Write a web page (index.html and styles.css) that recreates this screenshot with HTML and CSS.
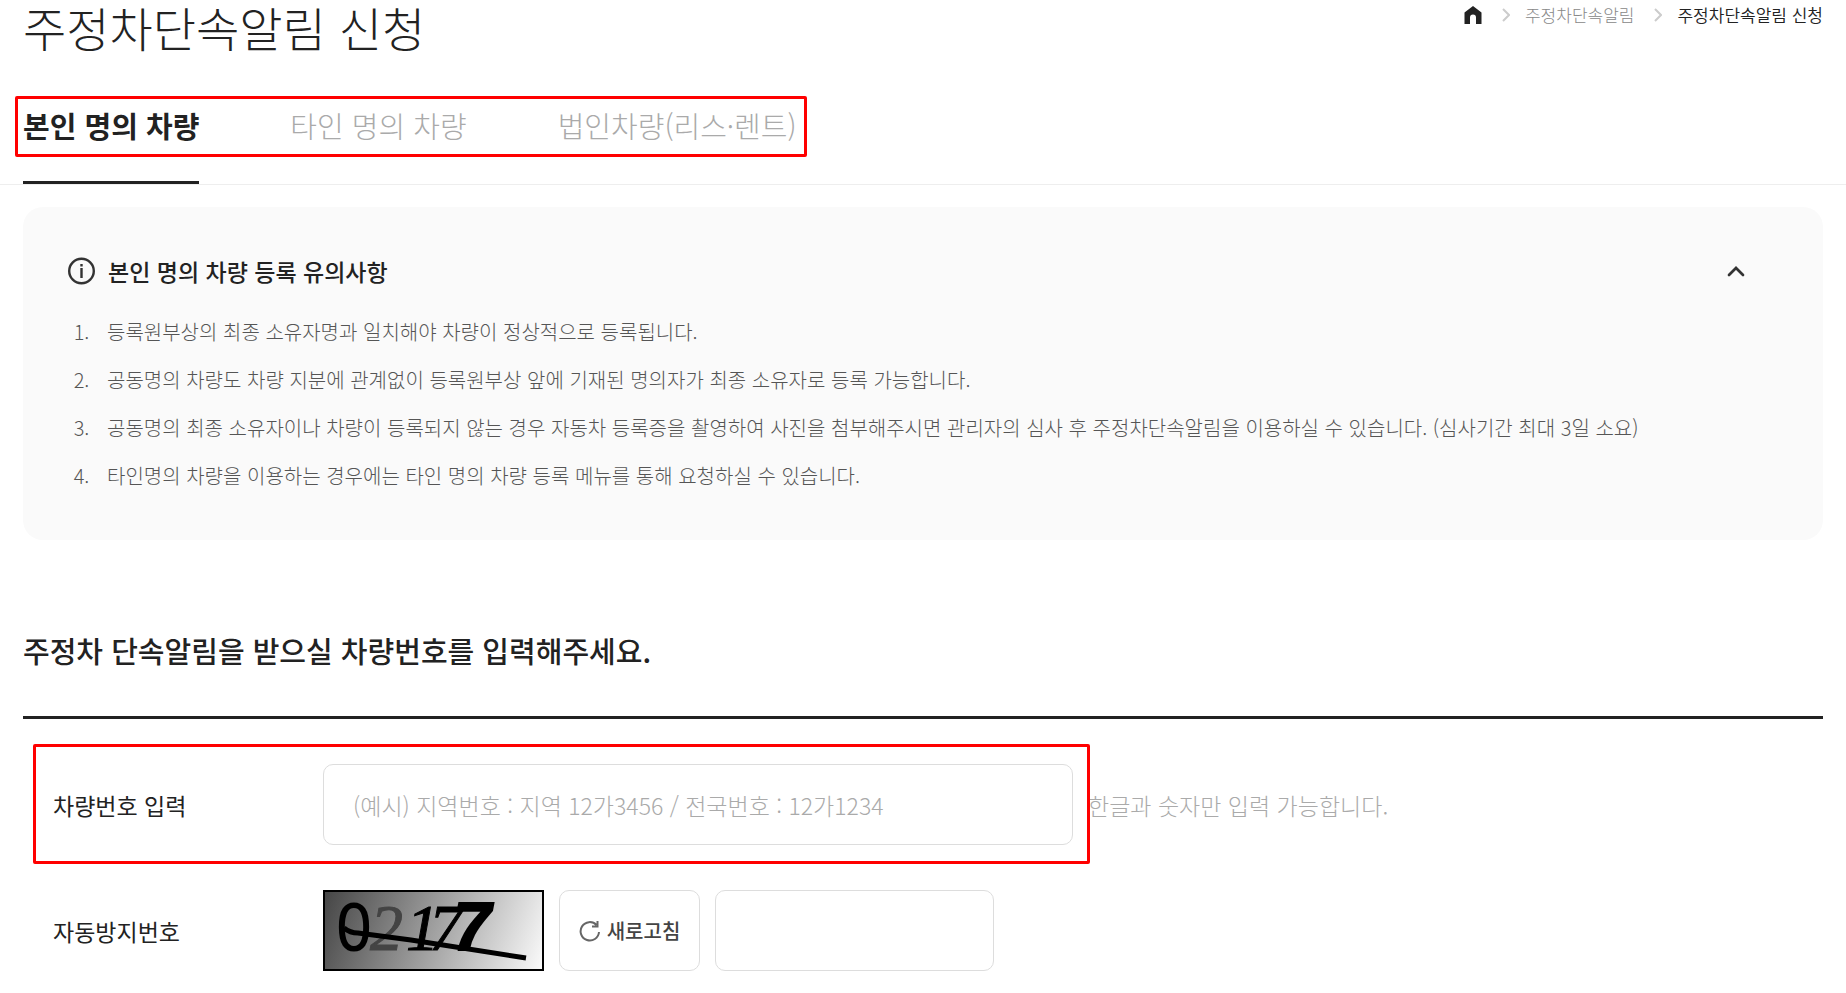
FILE: index.html
```
<!DOCTYPE html>
<html lang="ko">
<head>
    <meta charset="UTF-8">
    <meta name="viewport" content="width=device-width, initial-scale=1.0">
    <title>주정차단속알림 신청</title>
    <link rel="stylesheet" href="styles.css">
</head>
<body>
    <header class="page-header">
        <h1 class="page-title">주정차단속알림 신청</h1>
        <nav class="breadcrumb" aria-label="현재 위치">
            <a href="#" class="home" aria-label="홈">
                <svg width="18" height="18" viewBox="0 0 18 18"><path d="M9 0 .5 6.500V18H6v-6.500a3 3 0 0 1 6 0V18h5.500V6.500z" fill="#222"/></svg>
            </a>
            <svg class="sep" width="8" height="14" viewBox="0 0 8 14"><path d="m1 1 6 6-6 6" fill="none" stroke="#ccc" stroke-width="2"/></svg>
            <a href="#">주정차단속알림</a>
            <svg class="sep" width="8" height="14" viewBox="0 0 8 14"><path d="m1 1 6 6-6 6" fill="none" stroke="#ccc" stroke-width="2"/></svg>
            <a href="#" class="current">주정차단속알림 신청</a>
        </nav>
    </header>

    <nav class="tabs">
        <div class="tab-list">
            <a href="#" class="tab active">본인 명의 차량</a>
            <a href="#" class="tab">타인 명의 차량</a>
            <a href="#" class="tab">법인차량(리스·렌트)</a>
        </div>
    </nav>

    <main class="content">
        <section class="notice">
            <div class="notice-head">
                <svg width="28" height="28" viewBox="0 0 28 28">
                    <circle cx="13.500" cy="14" r="12.300" fill="none" stroke="#333" stroke-width="2.400"/>
                    <path d="M13.500 11v10M13.500 7v2.500" stroke="#333" stroke-width="2.400"/>
                </svg>
                <h2>본인 명의 차량 등록 유의사항</h2>
                <button type="button" class="toggle" aria-label="접기">
                    <svg width="18" height="12" viewBox="0 0 18 12"><path d="m2 10 7-7 7 7" fill="none" stroke="#333" stroke-width="2.700" stroke-linecap="round"/></svg>
                </button>
            </div>
            <ol class="notice-list">
                <li>등록원부상의 최종 소유자명과 일치해야 차량이 정상적으로 등록됩니다.</li>
                <li>공동명의 차량도 차량 지분에 관계없이 등록원부상 앞에 기재된 명의자가 최종 소유자로 등록 가능합니다.</li>
                <li>공동명의 최종 소유자이나 차량이 등록되지 않는 경우 자동차 등록증을 촬영하여 사진을 첨부해주시면 관리자의 심사 후 주정차단속알림을 이용하실 수 있습니다. (심사기간 최대 3일 소요)</li>
                <li>타인명의 차량을 이용하는 경우에는 타인 명의 차량 등록 메뉴를 통해 요청하실 수 있습니다.</li>
            </ol>
        </section>

        <h2 class="form-title">주정차 단속알림을 받으실 차량번호를 입력해주세요.</h2>

        <form class="form">
            <div class="row marked">
                <label for="carNo">차량번호 입력</label>
                <input type="text" id="carNo" class="car-no" placeholder="(예시) 지역번호 : 지역 12가3456 / 전국번호 : 12가1234">
                <span class="hint">한글과 숫자만 입력 가능합니다.</span>
            </div>
            <div class="row">
                <label for="captcha">자동방지번호</label>
                <svg class="captcha" width="221" height="81" viewBox="0 0 221 81">
                    <defs>
                        <linearGradient id="shade" gradientUnits="userSpaceOnUse" x1="0" y1="0" x2="221" y2="81">
                            <stop offset="0" stop-color="#444"/>
                            <stop offset="1" stop-color="#fcfcfc"/>
                        </linearGradient>
                    </defs>
                    <rect x="1" y="1" width="219" height="79" fill="url(#shade)" stroke="#000" stroke-width="2"/>
                    <text class="d0" x="12" y="59">0</text>
                    <text class="d1" x="47" y="60">2</text>
                    <text class="d2" x="83" y="60">1</text>
                    <text class="d3" x="106" y="60">7</text>
                    <text class="d4" x="130" y="60">7</text>
                    <path d="M21 38q6 5 14 5l53 7 115 18" fill="none" stroke="#000" stroke-width="5"/>
                </svg>
                <button type="button" class="refresh">
                    <svg width="22" height="22" viewBox="0 0 22 22"><path d="M17.500 5A9.200 9.200 0 1 0 20 12M18.500 1v5.500H13" fill="none" stroke="#666" stroke-width="2"/></svg>
                    새로고침
                </button>
                <input type="text" id="captcha" class="captcha-input">
            </div>
        </form>
    </main>
</body>
</html>
```
FILE: styles.css
```
*, *::after {
    box-sizing: border-box;
}
body {
    margin: 0;
    font-family: "Noto Sans CJK KR", sans-serif;
    font-weight: 300;
    color: #222;
    background: white;
}
a {
    color: inherit;
    text-decoration: none;
}
h1, h2, ol {
    margin: 0;
    padding: 0;
}
.page-header {
    display: flex;
    justify-content: space-between;
    align-items: flex-start;
    padding: 0 23px;
}
.page-title {
    font-size: 47px;
    font-weight: 300;
    line-height: 54px;
}
.breadcrumb {
    display: flex;
    align-items: center;
    font-size: 17px;
    line-height: 29px;
    color: #888;
}
.breadcrumb .home {
    display: flex;
}
.breadcrumb .sep {
    margin: 0 15px 0 20px;
}
.breadcrumb .current {
    color: #222;
    font-weight: 350;
}
.tabs {
    padding: 42px 23px 0;
    border-bottom: 1px solid #eee;
}
.tab-list {
    display: flex;
    gap: 91px;
    width: fit-content;
    position: relative;
}
.tab-list::after {
    content: "";
    position: absolute;
    top: 0;
    left: -8px;
    right: -10px;
    height: 61px;
    border: 3px solid red;
    border-radius: 2px;
    pointer-events: none;
}
.tab {
    font-size: 29px;
    line-height: 58px;
    padding-bottom: 27px;
    color: #aaa;
    border-bottom: 3px solid transparent;
}
.tab.active {
    font-weight: bold;
    color: #222;
    border-bottom-color: #222;
}
.content {
    padding: 22px 23px;
}
.notice {
    padding: 44px 45px 40px;
    background: #fafafa;
    border-radius: 20px;
}
.notice-head {
    display: flex;
    align-items: center;
    gap: 12px;
    line-height: 40px;
}
.notice-head h2 {
    font-size: 23px;
    font-weight: 500;
}
.toggle {
    display: flex;
    margin-left: auto;
    margin-right: 25px;
    padding: 8px;
    border: none;
    background: none;
    cursor: pointer;
}
.notice-list {
    margin-top: 17px;
    padding-left: 27px;
    font-size: 20px;
    line-height: 48px;
    color: #555;
}
.notice-list li {
    padding-left: 12px;
}
.form-title {
    padding: 80px 0 36px;
    font-size: 29px;
    font-weight: 500;
    line-height: 60px;
    border-bottom: 3px solid #222;
}
.form {
    padding-top: 45px;
}
.row {
    display: flex;
    align-items: center;
    gap: 15px;
    width: fit-content;
    margin-bottom: 45px;
    padding-left: 30px;
    position: relative;
}
.row label {
    width: 255px;
    font-size: 23px;
    font-weight: 400;
}
.row.marked::after {
    content: "";
    position: absolute;
    top: -20px;
    bottom: -19px;
    left: 10px;
    width: 1057px;
    border: 3px solid red;
    border-radius: 2px;
    pointer-events: none;
}
.row input, .refresh {
    height: 81px;
    border: 1px solid #ddd;
    border-radius: 10px;
    background: white;
    font-family: inherit;
}
.car-no {
    width: 750px;
    padding: 0 29px;
    font-size: 23px;
    font-weight: 300;
}
.car-no::placeholder {
    color: #aaa;
}
.hint {
    font-size: 23px;
    color: #aaa;
}
.captcha-input {
    width: 279px;
    padding: 0 20px;
    font-size: 23px;
}
.refresh {
    display: flex;
    align-items: center;
    justify-content: center;
    gap: 6px;
    width: 141px;
    font-size: 20px;
    font-weight: 500;
    color: #444;
    cursor: pointer;
}
.captcha text {
    font-family: "Liberation Serif", serif;
    font-style: italic;
    font-size: 66px;
}
.captcha .d0 {
    font-family: "DejaVu Sans", sans-serif;
    font-style: normal;
    font-size: 60px;
    stroke: #000;
    stroke-width: 3px;
}
.captcha .d1 {
    fill: #444;
    stroke: #444;
}
.captcha .d2, .captcha .d3 {
    stroke: #000;
}
.captcha .d4 {
    font-family: "Liberation Sans", sans-serif;
    font-weight: bold;
    font-size: 68px;
    stroke: #000;
    stroke-width: 2px;
}
```
